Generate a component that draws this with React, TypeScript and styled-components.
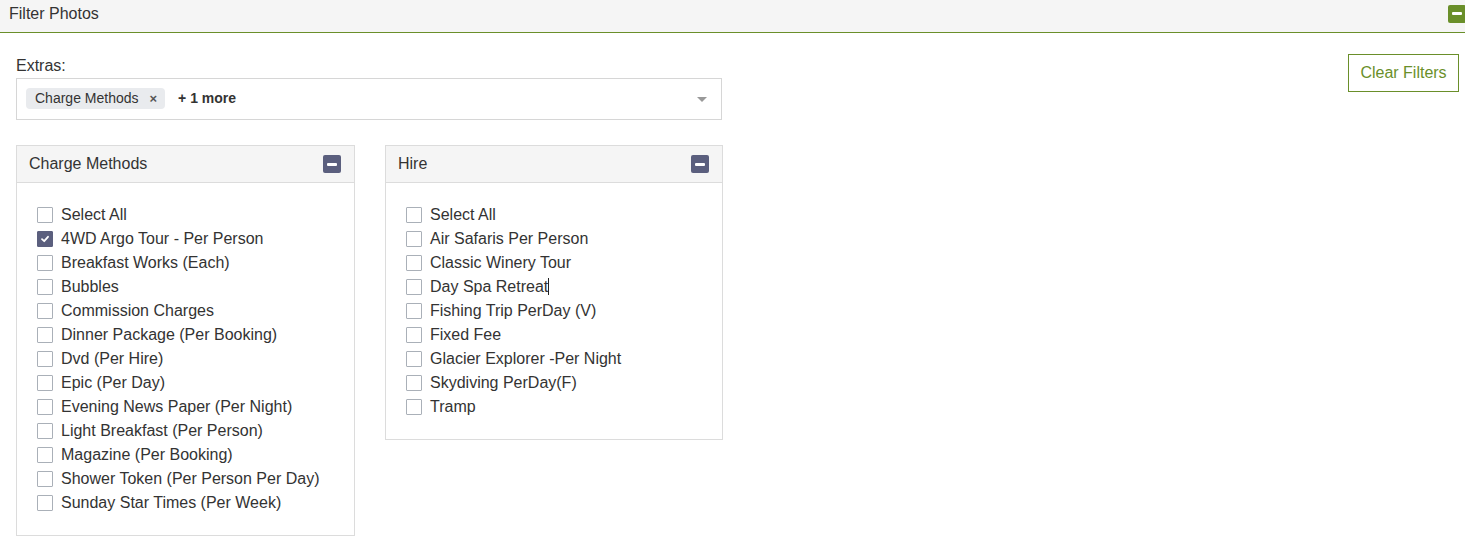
import React from "react";
import styled, { createGlobalStyle } from "styled-components";

const Global = createGlobalStyle`
  html, body { margin: 0; padding: 0; background: #fff; }
  body { font-family: "Liberation Sans", Arial, sans-serif; color: #333; font-size: 16px; }
  * { box-sizing: border-box; }
`;

const green = "#6a8f2a";
const slate = "#5b5f7e";

const TopBar = styled.div`
  height: 33px;
  background: #f5f5f5;
  border-bottom: 1px solid ${green};
  display: flex;
  align-items: center;
  justify-content: space-between;
  padding-left: 9px;
  padding-bottom: 4px;
`;

const TopTitle = styled.span`
  font-size: 16px;
  color: #333;
`;

const MinusBox = styled.span<{ $bg: string }>`
  width: 18px;
  height: 18px;
  background: ${(p) => p.$bg};
  border-radius: 2px;
  display: inline-flex;
  align-items: center;
  justify-content: center;
  flex-shrink: 0;
  &::after {
    content: "";
    width: 10px;
    height: 3px;
    background: #fff;
    border-radius: 1px;
  }
`;

const TopMinus = styled(MinusBox)`
  margin-right: -1px;
  margin-top: -1px;
`;

const Content = styled.div`
  display: flex;
  justify-content: space-between;
  align-items: flex-start;
  padding: 21px 6px 0 16px;
`;

const LeftCol = styled.div`
  width: 706px;
`;

const Label = styled.div`
  font-size: 16px;
  line-height: 20px;
  margin-top: 2px;
  margin-bottom: 2px;
`;

const SelectBox = styled.div`
  height: 42px;
  border: 1px solid #d6d6d6;
  display: flex;
  align-items: center;
  padding: 0 14px 2px 9px;
  gap: 14px;
`;

const Tag = styled.span`
  display: inline-flex;
  align-items: center;
  height: 21px;
  background: #e9ebee;
  border-radius: 4px;
  padding: 0 8px 0 9px;
  font-size: 14px;
  color: #333;
  gap: 11px;
`;

const TagX = styled.span`
  font-size: 13px;
  font-weight: bold;
  color: #555;
`;

const More = styled.span`
  font-size: 14px;
  font-weight: bold;
  color: #333;
  flex: 1;
  margin-left: -1px;
`;

const Caret = styled.span`
  width: 0;
  height: 0;
  border-left: 5px solid transparent;
  border-right: 5px solid transparent;
  border-top: 5px solid #999;
  margin-top: 2px;
`;

const Panels = styled.div`
  display: grid;
  grid-template-columns: 339px 338px;
  column-gap: 30px;
  align-items: start;
  margin-top: 25px;
`;

const Panel = styled.div`
  border: 1px solid #dcdcdc;
`;

const PanelHead = styled.div`
  height: 37px;
  background: #f5f5f5;
  border-bottom: 1px solid #dcdcdc;
  display: flex;
  align-items: center;
  justify-content: space-between;
  padding: 0 13px 0 12px;
  font-size: 16px;
  color: #333;
`;

const List = styled.div`
  padding: 20px 20px 20px 20px;
  display: flex;
  flex-direction: column;
`;

const Row = styled.label`
  display: flex;
  align-items: center;
  height: 24px;
  gap: 8px;
  font-size: 16px;
  color: #333;
`;

const Box = styled.span<{ $checked?: boolean }>`
  width: 16px;
  height: 16px;
  border: 1px solid ${(p) => (p.$checked ? slate : "#aab0b8")};
  background: ${(p) => (p.$checked ? slate : "#fff")};
  border-radius: 1px;
  display: inline-flex;
  align-items: center;
  justify-content: center;
  flex-shrink: 0;
`;

const TextCaret = styled.span`
  display: inline-block;
  width: 1px;
  height: 17px;
  background: #222;
  vertical-align: -3px;
`;

const ClearButton = styled.button`
  margin-top: 0;
  height: 38px;
  width: 111px;
  background: #fff;
  border: 1px solid ${green};
  color: ${green};
  font-family: "Liberation Sans", Arial, sans-serif;
  font-size: 16px;
  padding: 0;
  cursor: pointer;
`;

const Check = () => (
  <svg width="10" height="10" viewBox="0 0 10 10">
    <path d="M2 5.2 L4.2 7.2 L8 2.8" stroke="#fff" strokeWidth="1.8" fill="none" strokeLinecap="round" strokeLinejoin="round" />
  </svg>
);

const chargeItems = [
  "Select All",
  "4WD Argo Tour - Per Person",
  "Breakfast Works (Each)",
  "Bubbles",
  "Commission Charges",
  "Dinner Package (Per Booking)",
  "Dvd (Per Hire)",
  "Epic (Per Day)",
  "Evening News Paper (Per Night)",
  "Light Breakfast (Per Person)",
  "Magazine (Per Booking)",
  "Shower Token (Per Person Per Day)",
  "Sunday Star Times (Per Week)",
];

const hireItems = [
  "Select All",
  "Air Safaris Per Person",
  "Classic Winery Tour",
  "Day Spa Retreat",
  "Fishing Trip PerDay (V)",
  "Fixed Fee",
  "Glacier Explorer -Per Night",
  "Skydiving PerDay(F)",
  "Tramp",
];

const FilterPanel: React.FC<{ title: string; items: string[]; checked?: string[]; caretAfter?: string }> = ({
  title,
  items,
  checked = [],
  caretAfter,
}) => (
  <Panel>
    <PanelHead>
      <span>{title}</span>
      <MinusBox $bg={slate} />
    </PanelHead>
    <List>
      {items.map((it) => {
        const c = checked.includes(it);
        return (
          <Row key={it}>
            <Box $checked={c}>{c && <Check />}</Box>
            <span>
              {it}
              {caretAfter === it && <TextCaret />}
            </span>
          </Row>
        );
      })}
    </List>
  </Panel>
);

export default function App() {
  return (
    <>
      <Global />
      <TopBar>
        <TopTitle>Filter Photos</TopTitle>
        <TopMinus $bg={green} />
      </TopBar>
      <Content>
        <LeftCol>
          <Label>Extras:</Label>
          <SelectBox>
            <Tag>
              Charge Methods <TagX>×</TagX>
            </Tag>
            <More>+ 1 more</More>
            <Caret />
          </SelectBox>
          <Panels>
            <FilterPanel title="Charge Methods" items={chargeItems} checked={["4WD Argo Tour - Per Person"]} />
            <FilterPanel title="Hire" items={hireItems} caretAfter="Day Spa Retreat" />
          </Panels>
        </LeftCol>
        <ClearButton>Clear Filters</ClearButton>
      </Content>
    </>
  );
}
